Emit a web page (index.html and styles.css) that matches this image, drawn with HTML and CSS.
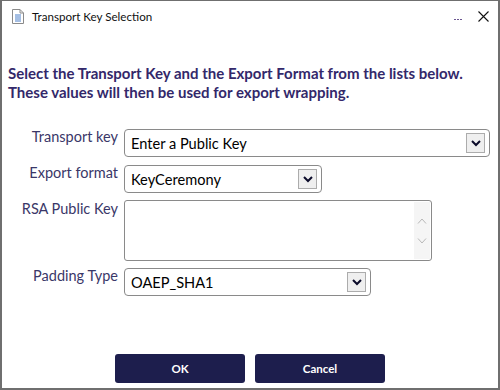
FILE: index.html
```html
<!DOCTYPE html>
<html lang="en">
<head>
    <meta charset="UTF-8">
    <title>Transport Key Selection</title>
    <link rel="stylesheet" href="styles.css">
</head>
<body>
    <div class="window">
        <header class="titlebar">
            <svg class="doc-icon" width="12" height="15" viewBox="0 0 12 15">
                <path d="M0.5 0.5 H8 L11.5 4 V14.5 H0.5 Z" fill="#fff" stroke="#8a8a8a"/>
                <path d="M8 0.5 V4 H11.5" fill="none" stroke="#8a8a8a"/>
                <path d="M3 6 H9 M3 8 H9 M3 10 H9 M3 12 H9" stroke="#4a7fc8"/>
            </svg>
            <span class="title">Transport Key Selection</span>
            <span class="more"><i></i><i></i><i></i></span>
            <svg class="close" width="11" height="11" viewBox="0 0 11 11">
                <path d="M0.5 0.5 L10.5 10.5 M10.5 0.5 L0.5 10.5" stroke="#111" stroke-width="1.1"/>
            </svg>
        </header>

        <main class="content">
            <p class="intro">Select the Transport Key and the Export Format from the lists below.<br>These values will then be used for export wrapping.</p>

            <div class="form-grid">
                <label class="field-label">Transport key</label>
                <div class="dropdown wide">
                    <span>Enter a Public Key</span>
                    <span class="arrow"><svg width="10" height="7" viewBox="0 0 10 7"><path d="M1 1 L5 5 L9 1" fill="none" stroke="#0b0b2a" stroke-width="2"/></svg></span>
                </div>

                <label class="field-label">Export format</label>
                <div class="dropdown medium">
                    <span>KeyCeremony</span>
                    <span class="arrow"><svg width="10" height="7" viewBox="0 0 10 7"><path d="M1 1 L5 5 L9 1" fill="none" stroke="#0b0b2a" stroke-width="2"/></svg></span>
                </div>

                <label class="field-label">RSA Public Key</label>
                <div class="textbox">
                    <div class="scrollbar">
                        <svg width="10" height="6" viewBox="0 0 10 6"><path d="M1 5.5 L5 1 L9 5.5" fill="none" stroke="#b8b8b8" stroke-width="1"/></svg>
                        <svg width="10" height="6" viewBox="0 0 10 6"><path d="M1 0.5 L5 5 L9 0.5" fill="none" stroke="#b8b8b8" stroke-width="1"/></svg>
                    </div>
                </div>

                <label class="field-label">Padding Type</label>
                <div class="dropdown narrow">
                    <span>OAEP_SHA1</span>
                    <span class="arrow"><svg width="10" height="7" viewBox="0 0 10 7"><path d="M1 1 L5 5 L9 1" fill="none" stroke="#0b0b2a" stroke-width="2"/></svg></span>
                </div>
            </div>
        </main>

        <footer class="buttons">
            <button class="btn">OK</button>
            <button class="btn">Cancel</button>
        </footer>
    </div>
</body>
</html>
```

FILE: styles.css
```css
html, body {
    margin: 0;
    padding: 0;
    background: #fff;
}

.window {
    width: 500px;
    height: 390px;
    box-sizing: border-box;
    border: 2px solid #6f6f6f;
    border-top-width: 1px;
    display: flex;
    flex-direction: column;
    font-family: Lato, "Open Sans", sans-serif;
}

.titlebar {
    height: 31px;
    display: flex;
    align-items: center;
    padding: 0 9px 0 10px;
}

.doc-icon {
    margin-right: 8px;
}

.title {
    font-family: Lato, sans-serif;
    font-size: 11.6px;
    color: #111;
    flex: 1;
}

.more {
    display: flex;
    gap: 1px;
    margin-right: 16px;
    margin-top: 5px;
}

.more i {
    width: 2px;
    height: 1px;
    background: #6a5590;
}

.content {
    flex: 1;
    padding: 0 0 0 6px;
}

.intro {
    margin: 32px 0 27px;
    font-size: 15px;
    line-height: 19px;
    font-weight: bold;
    color: #33286a;
}

.form-grid {
    display: grid;
    grid-template-columns: 110px auto;
    column-gap: 6px;
    row-gap: 8px;
    justify-items: start;
}

.field-label {
    justify-self: end;
    font-size: 14.5px;
    line-height: 16px;
    color: #3a3768;
}

.dropdown {
    box-sizing: border-box;
    height: 28px;
    border: 1px solid #8a8a8a;
    border-radius: 4px;
    display: flex;
    align-items: center;
    justify-content: space-between;
    padding: 0 4px 0 6px;
    font-size: 14.6px;
    color: #000;
}

.dropdown.wide { width: 366px; }
.dropdown.medium { width: 198px; }
.dropdown.narrow { width: 247px; }

.arrow {
    box-sizing: border-box;
    width: 19px;
    height: 20px;
    border: 1px solid #acacac;
    background: #efefef;
    display: flex;
    align-items: center;
    justify-content: center;
}

.textbox {
    box-sizing: border-box;
    width: 308px;
    height: 61px;
    margin-top: -1px;
    margin-bottom: -1px;
    border: 1px solid #8a8a8a;
    border-radius: 3px;
    display: flex;
    justify-content: flex-end;
    padding: 1px;
}

.scrollbar {
    width: 16px;
    background: #f5f5f5;
    display: flex;
    flex-direction: column;
    align-items: center;
    justify-content: center;
    gap: 14px;
}

.buttons {
    display: flex;
    justify-content: center;
    gap: 10px;
    padding-bottom: 5px;
}

.btn {
    width: 130px;
    height: 29px;
    border: none;
    border-radius: 3px;
    background: #1d1e4d;
    color: #fff;
    font-family: Lato, sans-serif;
    font-weight: bold;
    font-size: 11.5px;
}
```
